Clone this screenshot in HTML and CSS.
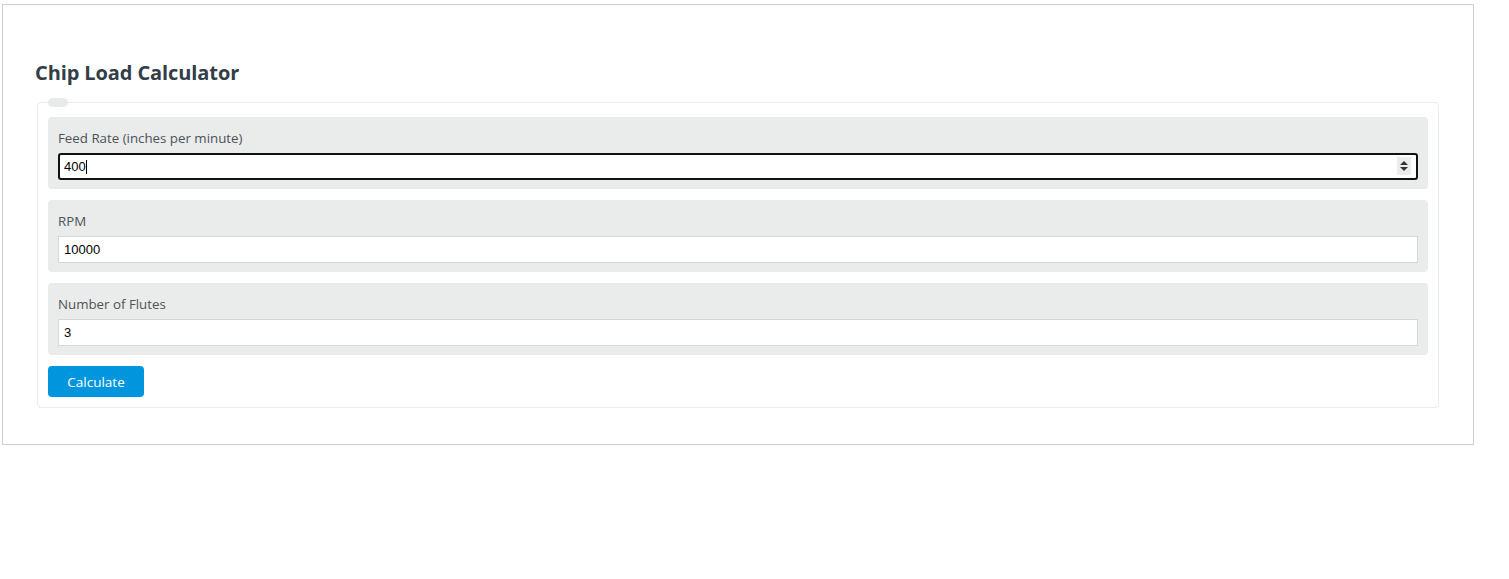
FILE: index.html
```html
<!DOCTYPE html>
<html>
<head>
<meta charset="utf-8">
<link rel="stylesheet" href="styles.css">
</head>
<body>
<div class="card">
  <h2 class="title">Chip Load Calculator</h2>
  <fieldset class="form">
    <legend class="legend"></legend>
    <div class="group">
      <label class="label">Feed Rate (inches per minute)</label>
      <div class="field-wrap">
        <input class="input input-focused" type="text" value="400">
        <span class="caret"></span>
        <span class="spinner">
          <svg width="10" height="12" viewBox="0 0 10 12"><path d="M5 1 L9 5 L1 5 Z" fill="#333"/><path d="M5 11 L9 7 L1 7 Z" fill="#333"/></svg>
        </span>
      </div>
    </div>
    <div class="group">
      <label class="label">RPM</label>
      <input class="input" type="text" value="10000">
    </div>
    <div class="group">
      <label class="label">Number of Flutes</label>
      <input class="input" type="text" value="3">
    </div>
    <button class="btn">Calculate</button>
  </fieldset>
</div>
</body>
</html>
```
FILE: styles.css
```css
html, body {
  margin: 0;
  padding: 0;
  background: #fff;
}
body {
  font-family: "Open Sans", "Noto Sans", sans-serif;
}
.card {
  box-sizing: border-box;
  width: 1472px;
  height: 441px;
  margin: 4px 0 0 2px;
  border: 1px solid #cfcfd2;
  padding: 55px 32px 0 32px;
}
.title {
  margin: 0 0 12px 0;
  font-size: 20px;
  line-height: 26px;
  font-weight: 700;
  color: #323d48;
  letter-spacing: -0.1px;
}
.form {
  margin: 0 2px;
  border: 1px solid #ececec;
  border-radius: 4px;
  padding: 10px 10px 10px 10px;
  display: flex;
  flex-direction: column;
  gap: 11px;
}
.legend {
  width: 20px;
  height: 9px;
  padding: 0;
  margin-left: 0;
  background: #e9eaea;
  border-radius: 5px;
  display: block;
}
.group {
  background: #eaebeb;
  border-radius: 4px;
  padding: 10px 10px 9px 10px;
  display: flex;
  flex-direction: column;
}
.label {
  font-size: 13.3px;
  line-height: 20px;
  color: #4d5358;
  margin: 1px 0 5px 0;
}
.field-wrap {
  position: relative;
}
.input {
  box-sizing: border-box;
  width: 100%;
  height: 27px;
  border: 1px solid #d6d6d6;
  border-radius: 0;
  padding: 0 5px;
  font-family: "Liberation Sans", Arial, sans-serif;
  font-size: 13px;
  color: #000;
  background: #fff;
  outline: none;
}
.input-focused {
  border: 2px solid #111;
  border-radius: 3px;
  padding: 0 4px;
}
.caret {
  position: absolute;
  left: 28px;
  top: 7px;
  width: 1px;
  height: 14px;
  background: #000;
}
.spinner {
  position: absolute;
  right: 7px;
  top: 4px;
  width: 14px;
  height: 18px;
  background: #ececec;
  display: flex;
  align-items: center;
  justify-content: center;
}
.btn {
  align-self: flex-start;
  width: 96px;
  height: 31px;
  border: none;
  border-radius: 4px;
  background: #0095dc;
  color: #fff;
  font-family: "Open Sans", "Noto Sans", sans-serif;
  font-size: 13.5px;
  padding: 0;
}
```
